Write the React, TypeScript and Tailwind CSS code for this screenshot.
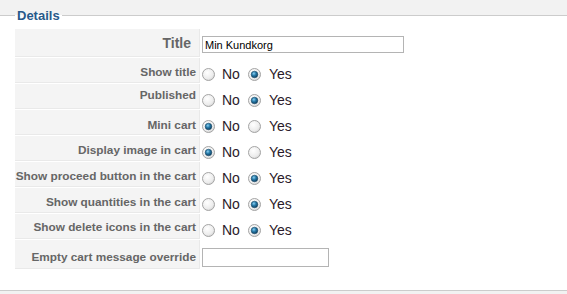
import React from 'react';

const FONT = { fontFamily: '"Liberation Sans", Arial, sans-serif' };

// Windows-classic style radio bullet
const Radio: React.FC<{ checked?: boolean }> = ({ checked }) => (
    <svg width="13" height="13" viewBox="0 0 13 13" className="shrink-0">
        <defs>
            <radialGradient id="rbg" cx="40%" cy="35%" r="70%">
                <stop offset="0%" stopColor="#ffffff" />
                <stop offset="70%" stopColor="#ececec" />
                <stop offset="100%" stopColor="#d0d0d0" />
            </radialGradient>
            <radialGradient id="rdot" cx="40%" cy="35%" r="65%">
                <stop offset="0%" stopColor="#8fd0f0" />
                <stop offset="45%" stopColor="#2a7fae" />
                <stop offset="100%" stopColor="#0c3d5e" />
            </radialGradient>
        </defs>
        <circle cx="6.5" cy="6.5" r="6" fill="url(#rbg)" stroke="#a4a4a4" strokeWidth="1" />
        {checked && <circle cx="6.5" cy="6.5" r="3.3" fill="url(#rdot)" stroke="#1b4a68" strokeWidth="0.6" />}
    </svg>
);

const YesNo: React.FC<{ yes: boolean }> = ({ yes }) => (
    <div className="flex items-center h-[16px] text-[14px] text-[#2a1a2a]">
        <span className="ml-px flex"><Radio checked={!yes} /></span>
        <span className="ml-[7px]">No</span>
        <span className="ml-[8px] flex"><Radio checked={yes} /></span>
        <span className="ml-[8px]">Yes</span>
    </div>
);

interface RowProps {
    label: string;
    h: string;
    labelCls: string;
    valuePt: string;
    children: React.ReactNode;
}

const Row: React.FC<RowProps> = ({ label, h, labelCls, valuePt, children }) => (
    <div className="flex mb-px">
        <div className={`w-[185px] ${h} ${labelCls} shrink-0 bg-[#f4f4f4] border-b border-r border-[#e9e9e9] flex justify-end font-bold text-[#666666] whitespace-nowrap`}>
            {label}
        </div>
        <div className={`ml-px flex items-start ${valuePt}`}>{children}</div>
    </div>
);

const SMALL = 'pr-[3px] text-[11.8px] leading-[14px]';

const rows: { label: string; yes: boolean; labelPt: string }[] = [
    { label: 'Show title', yes: true, labelPt: 'pt-[7px]' },
    { label: 'Published', yes: true, labelPt: 'pt-[4px]' },
    { label: 'Mini cart', yes: false, labelPt: 'pt-[8px]' },
    { label: 'Display image in cart', yes: false, labelPt: 'pt-[7px]' },
    { label: 'Show proceed button in the cart', yes: true, labelPt: 'pt-[7px]' },
    { label: 'Show quantities in the cart', yes: true, labelPt: 'pt-[7px]' },
    { label: 'Show delete icons in the cart', yes: true, labelPt: 'pt-[6px]' },
];

export default function App() {
    return (
        <div className="w-[567px] h-[294px] bg-[#f2f2f2] overflow-hidden pt-[8px]" style={FONT}>
            <fieldset className="border-y border-[#cccccc] bg-white px-[15px] pt-[6px] pb-[20px]">
                <legend className="px-[2px] text-[13px] leading-[15px] font-bold text-[#27598a]">Details</legend>
                <div className="flex flex-col">
                    <Row label="Title" h="h-[28px]" labelCls="pt-[6px] pr-[8px] text-[14px] leading-[16px]" valuePt="pt-[7px]">
                        <input
                            readOnly
                            value="Min Kundkorg"
                            className="ml-px w-[202px] h-[17px] border border-[#b4b4b4] px-[2px] text-[11px] text-black outline-none"
                            style={FONT}
                        />
                    </Row>
                    {rows.map(r => (
                        <Row key={r.label} label={r.label} h="h-[25px]" labelCls={`${r.labelPt} ${SMALL}`} valuePt="pt-[8px]">
                            <YesNo yes={r.yes} />
                        </Row>
                    ))}
                    <Row label="Empty cart message override" h="h-[29px]" labelCls={`pt-[10px] ${SMALL}`} valuePt="pt-[8px]">
                        <input
                            readOnly
                            value=""
                            className="ml-px w-[127px] h-[19px] border border-[#b4b4b4] px-[2px] text-[11px] outline-none"
                            style={FONT}
                        />
                    </Row>
                </div>
            </fieldset>
        </div>
    );
}
